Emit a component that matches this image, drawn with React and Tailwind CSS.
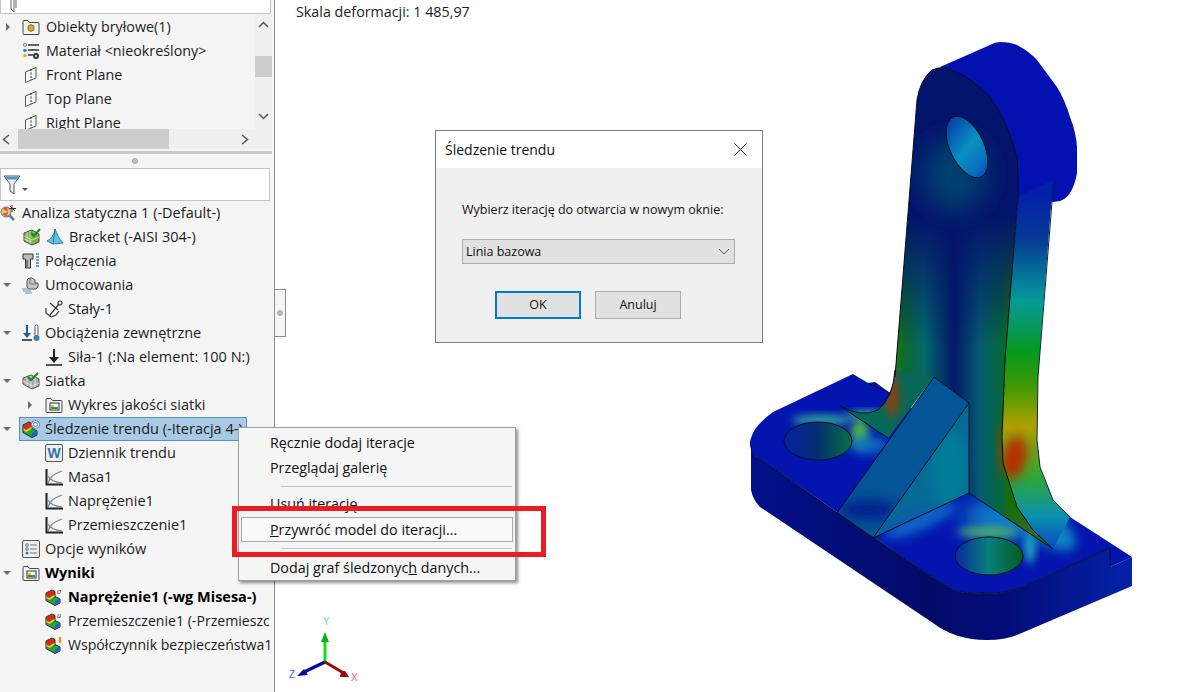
import React from 'react'

function Arrow({ open }) {
  return (
    <svg width="8" height="8" viewBox="0 0 8 8" className="shrink-0">
      {open ? <path d="M0 2h8L4 6z" fill="#6d6d6d" /> : <path d="M2 0v8l4-4z" fill="#6d6d6d" />}
    </svg>
  )
}

function Folder({ children }) {
  return (
    <svg width="18" height="18" viewBox="0 0 18 18">
      <path d="M1 15.500V3.500q0-1 1-1h4l1.500 2H16q1 0 1 1v10q0 1-1 1H2q-1 0-1-1z" fill="#f3f3f3" stroke="#444" />
      {children}
    </svg>
  )
}

function Plane() {
  return (
    <svg width="18" height="18" viewBox="0 0 18 18" fill="none" stroke="#555">
      <path d="M3.500 6 14 1.500V12L3.500 16.500z" />
      <path d="M9 3v11" strokeDasharray="2 1.500" stroke="#222" />
    </svg>
  )
}

function MaterialIcon() {
  return (
    <svg width="18" height="18" viewBox="0 0 18 18">
      <circle cx="3" cy="3" r="1.700" fill="#ddd" stroke="#666" strokeWidth=".7" />
      <circle cx="3" cy="8.500" r="1.800" fill="#2f86c8" />
      <circle cx="3" cy="13.500" r="1.800" fill="#e5b32a" />
      <path d="M6 3h11M6 8h11M6 13h5" stroke="#333" strokeWidth="1.500" />
      <circle cx="14" cy="14" r="3" fill="#333" />
      <circle cx="14" cy="14" r="1" fill="#fff" />
    </svg>
  )
}

function Stress({ mark }) {
  return (
    <svg width="18" height="18" viewBox="0 0 18 18">
      <path d="M1 5l6-3 3 1.500v5l5 2.500v4l-5 2.500-9-5z" fill="#22a838" stroke="#222" />
      <path d="M1.500 5.300l5.500-2.800 2.500 1.200v3L4 10l-2.500-1.300z" fill="#e02818" />
      <path d="M1.500 8.500L4 10l5.500-3v1.500L4.500 12l-3-1.700z" fill="#eed020" />
      <path d="M10 17l5-2.500v-4L10 13z" fill="#1f62d0" />
      {mark === 'target' && <g fill="#fff" stroke="#4a7fb5"><circle cx="13.500" cy="4.500" r="4" /><circle cx="13.500" cy="4.500" r="2" /></g>}
      {mark === 'sigma' && <text x="12" y="6" fontSize="7" fontStyle="italic" fill="#222">σ</text>}
      {mark === 'u' && <text x="12" y="6" fontSize="7" fontStyle="italic" fill="#222">u</text>}
      {mark === 'bang' && <path d="M15 1v6" stroke="#d8a010" strokeWidth="2.500" />}
    </svg>
  )
}

function Graph() {
  return (
    <svg width="18" height="18" viewBox="0 0 18 18" fill="none">
      <path d="M1.500 1v15.500H18" stroke="#222" strokeWidth="2" />
      <path d="M3 15 Q5 7 17 3M3 8q3 6 14 7" stroke="#6d8aa0" strokeWidth="1.300" />
    </svg>
  )
}

const icons = {
  study: (
    <svg width="18" height="18" viewBox="0 0 18 18">
      <circle cx="6" cy="8" r="5" fill="#e8d040" stroke="#777" />
      <path d="M3 5a5 5 0 0 1 4-2l1 5zM2 10l6-2-1 5z" fill="#d84a80" />
      <path d="M9 11l5 5" stroke="#4a7fb5" strokeWidth="2.500" />
      <path d="M12 1v7M9 4.500h7M10 2l5 5" stroke="#333" />
    </svg>
  ),
  mesh: (
    <svg width="18" height="18" viewBox="0 0 18 18">
      <path d="M1 5l8-3 7 4v8l-7 3-8-4z" fill="#7fb04a" stroke="#4b4b4b" />
      <path d="M4 4v10M7 3v13M1 8l8 4 7-3M1 11l8 3" stroke="#e6f0d8" strokeWidth=".7" fill="none" />
      <path d="M8 5l3 3 6-7" stroke="#138a13" strokeWidth="2" fill="none" />
    </svg>
  ),
  solid: (
    <svg width="18" height="18" viewBox="0 0 18 18">
      <path d="M9 1C8 7 5 11 1 13l6 3 10-1C13 11 11 6 9 1z" fill="#5cc0e0" stroke="#2a7fa5" />
      <path d="M9 1l-2 15" stroke="#2a7fa5" />
    </svg>
  ),
  bolt: (
    <svg width="18" height="18" viewBox="0 0 18 18">
      <path d="M1 2h10v5H8.500v9h-5V7H1z" fill="#bbb" stroke="#333" />
      <path d="M5 8v7" stroke="#333" />
      <path d="M14 2h3M14 5h3M14 8h3M14 11h3M14 14h3" stroke="#3a80b0" strokeWidth="1.400" />
    </svg>
  ),
  fixture: (
    <svg width="18" height="18" viewBox="0 0 18 18">
      <path d="M5 11V5q0-3 3-3h2l3 2v3h3v4l-2 2H7z" fill="#c4c4c4" stroke="#555" />
      <path d="M8 3v5h6" stroke="#777" fill="none" />
      <path d="M0 13h8M1 15h8M3 17h7" stroke="#6b8ead" />
    </svg>
  ),
  anchor: (
    <svg width="18" height="18" viewBox="0 0 18 18" fill="none" stroke="#333" strokeWidth="1.200">
      <circle cx="15" cy="3" r="2" />
      <path d="M13.500 4.500 5 15M1 8v5l5 4M5 3l8 7M14 11l-3 4-5 2" />
    </svg>
  ),
  loads: (
    <svg width="18" height="18" viewBox="0 0 18 18">
      <path d="M5 1v10" stroke="#1f5f9c" strokeWidth="2" />
      <path d="M1 9h8l-4 5z" fill="#1f5f9c" />
      <path d="M0 16h10" stroke="#222" strokeWidth="1.500" />
      <rect x="13" y="1" width="3" height="11" rx="1.500" fill="#fff" stroke="#555" />
      <circle cx="14.500" cy="14" r="3" fill="#3a80b0" />
    </svg>
  ),
  force: (
    <svg width="18" height="18" viewBox="0 0 18 18">
      <path d="M9 1v10" stroke="#222" strokeWidth="2" />
      <path d="M4 9h10l-5 6z" fill="#222" />
      <path d="M1 17h16" stroke="#222" strokeWidth="1.500" />
    </svg>
  ),
  netcheck: (
    <svg width="18" height="18" viewBox="0 0 18 18">
      <path d="M1 6l8-3 8 4v7l-7 3-9-5z" fill="#aaa" stroke="#555" />
      <path d="M1 9l9 5 7-3M5 5v9M9 4v12M13 5v10" stroke="#eee" strokeWidth=".8" fill="none" />
      <path d="M6 5l3 3 7-7" stroke="#138a13" strokeWidth="2" fill="none" />
    </svg>
  ),
  word: (
    <svg width="18" height="18" viewBox="0 0 18 18">
      <rect x=".5" y=".5" width="17" height="17" rx="1.500" fill="#eee" stroke="#555" />
      <text x="9" y="14" textAnchor="middle" fontSize="14" fontWeight="700" fontFamily="Liberation Sans" fill="#2f78ad">W</text>
    </svg>
  ),
  options: (
    <svg width="18" height="18" viewBox="0 0 18 18">
      <rect x=".5" y=".5" width="17" height="17" rx="1.500" fill="#eee" stroke="#555" />
      <circle cx="5" cy="5" r="1.500" fill="#bbb" stroke="#666" strokeWidth=".6" />
      <circle cx="5" cy="9" r="1.500" fill="#bbb" stroke="#666" strokeWidth=".6" />
      <circle cx="5" cy="13" r="1.500" fill="#2f78ad" />
      <path d="M8 5h7M8 9h7M8 13h7" stroke="#777" />
    </svg>
  ),
  chartFolder: (
    <Folder>
      <rect x="5" y="7" width="9" height="7" fill="#fff" stroke="#333" />
      <path d="M6 13V9h3v2h4v2z" fill="#2c9a3a" />
      <path d="M6 9h3v2H6z" fill="#e8c020" />
    </Folder>
  ),
}

const rows = [
  { left: 0, textAt: 22, icon: icons.study, label: 'Analiza statyczna 1 (-Default-)' },
  { left: 23, textAt: 69, icon: icons.mesh, extra: icons.solid, label: 'Bracket (-AISI 304-)' },
  { left: 22, textAt: 45, icon: icons.bolt, label: 'Połączenia' },
  { left: 22, textAt: 45, open: true, icon: icons.fixture, label: 'Umocowania' },
  { left: 45, textAt: 68, icon: icons.anchor, label: 'Stały-1' },
  { left: 22, textAt: 45, open: true, icon: icons.loads, label: 'Obciążenia zewnętrzne' },
  { left: 45, textAt: 68, icon: icons.force, label: 'Siła-1 (:Na element: 100 N:)' },
  { left: 22, textAt: 45, open: true, icon: icons.netcheck, label: 'Siatka' },
  { left: 45, textAt: 68, closed: true, icon: icons.chartFolder, label: 'Wykres jakości siatki' },
  { left: 22, textAt: 45, open: true, selected: true, icon: <Stress mark="target" />, label: 'Śledzenie trendu (-Iteracja 4-)' },
  { left: 45, textAt: 68, icon: icons.word, label: 'Dziennik trendu' },
  { left: 45, textAt: 68, icon: <Graph />, label: 'Masa1' },
  { left: 45, textAt: 68, icon: <Graph />, label: 'Naprężenie1' },
  { left: 45, textAt: 68, icon: <Graph />, label: 'Przemieszczenie1' },
  { left: 22, textAt: 45, icon: icons.options, label: 'Opcje wyników' },
  { left: 22, textAt: 45, open: true, bold: true, icon: icons.chartFolder, label: 'Wyniki' },
  { left: 45, textAt: 68, bold: true, icon: <Stress mark="sigma" />, label: 'Naprężenie1 (-wg Misesa-)' },
  { left: 45, textAt: 68, small: true, icon: <Stress mark="u" />, label: 'Przemieszczenie1 (-Przemieszc' },
  { left: 45, textAt: 68, small: true, icon: <Stress mark="bang" />, label: 'Współczynnik bezpieczeństwa1' },
]

function TreeRow({ row }) {
  return (
    <div className="relative h-6 whitespace-nowrap">
      {row.open && <div className="absolute left-[3px] top-2"><Arrow open /></div>}
      {row.closed && <div className="absolute left-[26px] top-2"><Arrow /></div>}
      {row.selected && <div className="absolute left-[19px] top-0 h-6 w-[228px] bg-[#a9c9e4] border border-[#4f94c4]"></div>}
      <div className="absolute top-[3px]" style={{ left: row.left }}>{row.icon}</div>
      {row.extra && <div className="absolute left-[46px] top-[3px]">{row.extra}</div>}
      <span className={`absolute top-0 leading-6 ${row.small ? 'text-[14.1px]' : 'text-[14.5px]'} ${row.bold ? 'font-bold text-black' : 'text-[#1c1c1c]'}`} style={{ left: row.textAt }}>
        {row.label}
      </span>
    </div>
  )
}

function Sidebar() {
  const top = [
    { closed: true, icon: <Folder><path d="M6 8l3-1.500L12 8v4l-3 1.500L6 12z" fill="#e6a817" stroke="#444" strokeWidth=".7" /></Folder>, label: 'Obiekty bryłowe(1)' },
    { icon: <MaterialIcon />, label: 'Materiał <nieokreślony>' },
    { icon: <Plane />, label: 'Front Plane' },
    { icon: <Plane />, label: 'Top Plane' },
    { icon: <Plane />, label: 'Right Plane' },
  ]
  return (
    <aside className="w-[275px] h-full shrink-0 bg-[#f5f5f5] border-r border-[#8c8c8c] flex flex-col overflow-hidden">
      <div className="h-[14px] w-[271px] bg-white border-b border-l border-r border-[#c4c4c4] shrink-0 overflow-hidden pl-[9px]">
        <svg width="8" height="13" viewBox="0 0 8 13" fill="none" stroke="#666"><path d="M1 0v9l3 3V0M6 0v8" /></svg>
      </div>
      <div className="flex h-[115px] shrink-0 w-[272px]">
        <div className="w-[255px] overflow-hidden pt-px">
          {top.map((r) => (
            <div key={r.label} className="relative h-6 whitespace-nowrap">
              {r.closed && <div className="absolute left-[4px] top-2"><Arrow /></div>}
              <div className="absolute left-[22px] top-[3px]">{r.icon}</div>
              <span className="absolute left-[46px] top-0 leading-6 text-[14.3px] text-[#1c1c1c]">{r.label}</span>
            </div>
          ))}
        </div>
        <div className="w-[17px] bg-[#f0f0f0] flex flex-col items-center">
          <svg width="11" height="7" viewBox="0 0 11 7" fill="none" stroke="#555" strokeWidth="1.500" className="mt-[7px]"><path d="M1 6l4.500-4.500L10 6" /></svg>
          <div className="w-full h-[21px] bg-[#cdcdcd] mt-[28px]"></div>
          <svg width="11" height="7" viewBox="0 0 11 7" fill="none" stroke="#555" strokeWidth="1.500" className="mt-[36px]"><path d="M1 1l4.500 4.500L10 1" /></svg>
        </div>
      </div>
      <div className="flex h-5 w-[272px] bg-[#f0f0f0] items-center shrink-0">
        <svg width="18" height="11" viewBox="0 0 18 11" fill="none" stroke="#555" strokeWidth="1.500"><path d="M9 1L3.500 5.500 9 10" /></svg>
        <div className="w-[151px] h-full bg-[#cdcdcd]"></div>
        <svg width="11" height="11" viewBox="0 0 11 11" fill="none" stroke="#555" strokeWidth="1.500" className="ml-[70px]"><path d="M3 1l5.500 4.500L3 10" /></svg>
      </div>
      <div className="h-[3px] w-[272px] mt-[2px] bg-[#c9c9c9] shrink-0"></div>
      <div className="h-[14px] flex items-center justify-center w-[270px] shrink-0">
        <div className="w-[6px] h-[6px] rounded-full bg-[#c2c2c2] border border-[#a8a8a8]"></div>
      </div>
      <div className="h-[33px] w-[270px] bg-white border border-[#c4c4c4] shrink-0 flex items-center pl-[2px] gap-[1px]">
        <svg width="18" height="20" viewBox="0 0 18 20">
          <path d="M1 1h16l-6 8v10l-4-3V9z" fill="#eee" stroke="#555" />
          <path d="M2 2h14l-2 2.500H4z" fill="#3f9bd0" />
        </svg>
        <div className="w-0 h-0 mt-[10px] border-x-[3px] border-x-transparent border-t-[3px] border-t-[#555]"></div>
      </div>
      <div>
        {rows.map((row, i) => <TreeRow key={i} row={row} />)}
      </div>
    </aside>
  )
}

function Dialog() {
  return (
    <div className="absolute left-[160px] top-[130px] w-[328px] h-[213px] border border-[#7b7b7b] bg-[#f0f0f0] flex flex-col">
      <div className="h-[37px] bg-white flex items-center justify-between pl-[9px] pr-[15px] shrink-0">
        <span className="text-[14px] text-[#111]">Śledzenie trendu</span>
        <svg width="13" height="13" viewBox="0 0 13 13" stroke="#222" fill="none"><path d="M.5.500l12 12M12.500.500l-12 12" /></svg>
      </div>
      <div className="pl-[26px] pt-[31px] text-[12.5px] text-[#111]">
        <p className="leading-[21px]">Wybierz iterację do otwarcia w nowym oknie:</p>
        <div className="mt-[19px] w-[273px] h-[25px] bg-[#e1e1e1] border border-[#adadad] flex items-center justify-between pl-[3px] pr-[4px]">
          <span className="pt-px">Linia bazowa</span>
          <svg width="12" height="7" viewBox="0 0 12 7" fill="none" stroke="#555"><path d="M1 1l5 5 5-5" /></svg>
        </div>
        <div className="flex gap-[14px] mt-[27px] ml-[33px]">
          <button className="w-[86px] h-[28px] pt-px bg-[#e1e1e1] border-2 border-[#0078d7]">OK</button>
          <button className="w-[86px] h-[28px] pt-px bg-[#e1e1e1] border border-[#adadad]">Anuluj</button>
        </div>
      </div>
    </div>
  )
}

function ContextMenu() {
  return (
    <div className="absolute left-[238px] top-[427px] w-[278px] h-[154px] bg-[#f5f5f5] border border-[#a0a0a0] shadow-[2px_2px_3px_rgba(0,0,0,0.45)] px-[2px] pt-[2px] text-[14.3px] text-[#111]">
      <div className="h-[25px] leading-[25px] pl-[29px]">Ręcznie dodaj iteracje</div>
      <div className="h-[25px] leading-[25px] pl-[29px]">Przeglądaj <u>g</u>alerię</div>
      <div className="h-px bg-[#c6c6c6] ml-[40px] mr-px mt-[6px] mb-[4px]"></div>
      <div className="h-[25px] leading-[25px] pl-[29px]"><u>U</u>suń iterację</div>
      <div className="h-[25px] leading-[24px] pl-[28px] bg-[#f9f9f9] border border-[#a8a8a8] mt-px"><u>P</u>rzywróć model do iteracji...</div>
      <div className="h-px bg-[#c6c6c6] ml-[40px] mr-px mt-[6px] mb-[6px]"></div>
      <div className="h-[25px] leading-[25px] pl-[29px]">Dodaj graf śledzonyc<u>h</u> danych...</div>
    </div>
  )
}

function Bracket() {
  const front = 'M895 377L917 100Q920 80 932 70Q938 67 945 68Q968 74 990 97Q1008 122 1017 157L1018 177V197L1005 360L1002 437L1003 463L1017 507L1033 530L1053 549L969 493V403L934 377Z'
  const band = 'M1053 180L1038 377L1037 440L1040 467L1053 500L1070 517L1053 549L1033 530L1017 507L1003 463L1002 437L1005 360L1018 197Z'
  const corner = 'L933 578L757 457Q747 448 751 438Q754 426 773 412'
  const baseTop = `M853 374L868 383L875 382L890 393L1070 517L1132 557L1110 567V548L1023 587Q1000 595 983 593Q965 594 953 590${corner}Z`
  const baseSide = 'M751 442V490Q753 500 760 507L933 623Q955 640 987 640Q1005 640 1017 635L1132 586V557L1110 567V548L1023 587Q1000 595 983 593Q965 594 953 590L933 578L757 457Q752 450 751 442Z'
  const cylinder = 'M940 67L990 45Q995 42 1000 42Q1010 42 1017 45Q1030 52 1037 60L1057 87Q1065 100 1070 117Q1076 132 1077 147V173Q1075 185 1070 193Q1066 199 1060 201L1053 202L1018 197L1000 120Z'
  return (
    <svg width="921" height="692" viewBox="275 0 921 692" className="absolute left-0 top-0">
      <defs>
        <filter id="b3" x="-50%" y="-50%" width="200%" height="200%"><feGaussianBlur stdDeviation="4" /></filter>
        <filter id="b6" x="-50%" y="-50%" width="200%" height="200%"><feGaussianBlur stdDeviation="6" /></filter>
        <filter id="b12" x="-50%" y="-50%" width="200%" height="200%"><feGaussianBlur stdDeviation="12" /></filter>
        <clipPath id="cFront"><path d={front} /></clipPath>
        <clipPath id="cBand"><path d={band} /></clipPath>
        <clipPath id="cTop"><path d={baseTop} /></clipPath>
        <clipPath id="cSide"><path d={baseSide} /></clipPath>
        <clipPath id="cRib"><path d="M934 377L969 403L873 538L837 513Z" /></clipPath>
        <clipPath id="cTri"><path d="M969 403V493L873 538Z" /></clipPath>
        <clipPath id="cFil"><path d="M840 406Q862 418 878 410Q893 398 895 370L934 377L888 438Z" /></clipPath>
        <clipPath id="cH1"><ellipse cx="818" cy="441" rx="34" ry="19" /></clipPath>
        <clipPath id="cH2"><ellipse cx="989" cy="556" rx="34" ry="19" /></clipPath>
        <linearGradient id="gFade" x1="0" y1="215" x2="0" y2="345" gradientUnits="userSpaceOnUse">
          <stop offset="0" stopColor="#000" />
          <stop offset="1" stopColor="#fff" />
        </linearGradient>
        <mask id="mFade" maskUnits="userSpaceOnUse" x="880" y="60" width="190" height="500">
          <rect x="880" y="60" width="190" height="500" fill="url(#gFade)" />
        </mask>
        <linearGradient id="gFront" x1="893" y1="0" x2="1010" y2="0" gradientUnits="userSpaceOnUse">
          <stop offset="0" stopColor="#2f7a00" />
          <stop offset=".1" stopColor="#0a6a30" />
          <stop offset=".27" stopColor="#04686a" />
          <stop offset=".52" stopColor="#021868" />
          <stop offset=".74" stopColor="#045a70" />
          <stop offset=".93" stopColor="#06683a" />
          <stop offset="1" stopColor="#1a6e08" />
        </linearGradient>
        <linearGradient id="gBand" x1="0" y1="195" x2="0" y2="545" gradientUnits="userSpaceOnUse">
          <stop offset="0" stopColor="#0320a8" />
          <stop offset=".13" stopColor="#063c98" />
          <stop offset=".3" stopColor="#069a98" />
          <stop offset=".45" stopColor="#069a20" />
          <stop offset=".55" stopColor="#409a00" />
          <stop offset=".66" stopColor="#b0a000" />
          <stop offset=".8" stopColor="#30a830" />
          <stop offset=".92" stopColor="#0a90b0" />
          <stop offset="1" stopColor="#0a50c0" />
        </linearGradient>
        <linearGradient id="gHole" x1="955" y1="115" x2="985" y2="178" gradientUnits="userSpaceOnUse">
          <stop offset="0" stopColor="#0436a8" />
          <stop offset=".5" stopColor="#0a90c0" />
          <stop offset=".8" stopColor="#0870c0" />
          <stop offset="1" stopColor="#0440b8" />
        </linearGradient>
        <linearGradient id="gH2" x1="955" y1="0" x2="1023" y2="0" gradientUnits="userSpaceOnUse">
          <stop offset="0" stopColor="#0828a0" />
          <stop offset=".5" stopColor="#06807a" />
          <stop offset="1" stopColor="#045a20" />
        </linearGradient>
        <linearGradient id="gH1" x1="784" y1="0" x2="852" y2="0" gradientUnits="userSpaceOnUse">
          <stop offset="0" stopColor="#0520a0" />
          <stop offset=".5" stopColor="#043070" />
          <stop offset="1" stopColor="#067040" />
        </linearGradient>
        <linearGradient id="gSide" x1="760" y1="0" x2="1132" y2="0" gradientUnits="userSpaceOnUse">
          <stop offset="0" stopColor="#030f88" />
          <stop offset=".45" stopColor="#020a68" />
          <stop offset=".65" stopColor="#020c78" />
          <stop offset="1" stopColor="#0422a8" />
        </linearGradient>
      </defs>

      <path d={baseSide} fill="url(#gSide)" />

      <path d={baseTop} fill="#0414ae" />
      <g clipPath="url(#cTop)">
        <ellipse cx="1010" cy="518" rx="48" ry="20" fill="#0a88c8" filter="url(#b12)" />
        <ellipse cx="1050" cy="530" rx="30" ry="14" transform="rotate(35 1050 530)" fill="#0888c0" filter="url(#b6)" />
        <ellipse cx="920" cy="520" rx="40" ry="10" transform="rotate(-24 920 520)" fill="#0868c8" filter="url(#b6)" />
        <ellipse cx="988" cy="532" rx="30" ry="5" fill="#50b868" filter="url(#b3)" />
        <ellipse cx="1030" cy="548" rx="5" ry="16" fill="#20b8c0" filter="url(#b3)" />
        <ellipse cx="860" cy="433" rx="9" ry="14" fill="#50b848" filter="url(#b3)" />
        <ellipse cx="822" cy="420" rx="30" ry="5" fill="#30b098" filter="url(#b3)" />
        <ellipse cx="868" cy="415" rx="22" ry="4" fill="#40c890" filter="url(#b3)" />
        <ellipse cx="868" cy="445" rx="20" ry="8" fill="#0a78c0" filter="url(#b6)" />
      </g>
      <g clipPath="url(#cH1)">
        <rect x="780" y="420" width="75" height="42" fill="url(#gH1)" />
      </g>
      <g clipPath="url(#cH2)">
        <rect x="950" y="535" width="75" height="42" fill="url(#gH2)" />
      </g>

      <path d={cylinder} fill="#0410b0" />
      <path d={band} fill="url(#gBand)" />
      <g clipPath="url(#cBand)">
        <ellipse cx="1014" cy="458" rx="12" ry="22" transform="rotate(14 1014 458)" fill="#b82a00" filter="url(#b6)" />
      </g>

      <path d={front} fill="#03146c" />
      <g clipPath="url(#cFront)">
        <ellipse cx="955" cy="175" rx="32" ry="36" fill="#03406e" filter="url(#b12)" />
        <rect x="880" y="60" width="190" height="500" fill="url(#gFront)" mask="url(#mFade)" />
        <ellipse cx="1004" cy="450" rx="5" ry="28" fill="#704a08" filter="url(#b3)" />
        <ellipse cx="1030" cy="528" rx="14" ry="20" fill="#2a6a20" filter="url(#b6)" />
      </g>
      <ellipse cx="967" cy="147" rx="17" ry="33" transform="rotate(-25 967 147)" fill="url(#gHole)" />

      <g clipPath="url(#cFil)">
        <rect x="835" y="365" width="105" height="80" fill="#07685a" />
        <ellipse cx="892" cy="395" rx="7" ry="22" fill="#8a4010" filter="url(#b3)" />
      </g>

      <path d="M934 377L969 403L873 538L837 513Z" fill="#055498" />
      <g clipPath="url(#cRib)">
        <ellipse cx="868" cy="510" rx="30" ry="10" fill="#04248e" filter="url(#b6)" />
      </g>
      <path d="M969 403V493L873 538Z" fill="#066a96" />
      <g clipPath="url(#cTri)">
        <ellipse cx="950" cy="470" rx="18" ry="40" fill="#067c98" filter="url(#b6)" />
        <ellipse cx="905" cy="522" rx="30" ry="8" transform="rotate(-25 905 522)" fill="#0a5aa8" filter="url(#b3)" />
      </g>

      <g fill="none" stroke="#04121e" strokeWidth="1">
        <path d="M895 377L917 100Q920 80 932 70Q938 67 945 68Q968 74 990 97Q1008 122 1017 157L1018 177V197L1005 360L1002 437L1003 463L1017 507L1033 530L1053 549" />
        <path d="M969 493L1053 549" />
        <path d="M1053 180L1052 202L1038 377L1037 440L1040 467L1053 500L1070 517" stroke="#04284a" />
        <ellipse cx="967" cy="147" rx="17" ry="33" transform="rotate(-25 967 147)" />
        <path d="M934 377L969 403L873 538L837 513ZM969 403V493L873 538" />
        <path d="M840 406L888 438M840 406Q862 418 878 410Q893 398 895 370" />
        <path d="M837 513L933 578" />
        <path d="M757 457L837 513M933 578L953 590Q965 594 983 593Q1000 595 1023 587L1110 548V567" />
        <path d="M868 383L890 393" />
        <ellipse cx="818" cy="441" rx="34" ry="19" />
        <ellipse cx="989" cy="556" rx="34" ry="19" />
      </g>

      <path d="M325 662V640" stroke="#10e010" strokeWidth="3" />
      <path d="M325 632l-4 10h8z" fill="#10b010" />
      <path d="M325 662L302 673" stroke="#000a9c" strokeWidth="3.5" />
      <path d="M297 676l7-7 4 6z" fill="#000a9c" />
      <path d="M325 662L342 672" stroke="#a00808" strokeWidth="3" />
      <path d="M349 677l-9 0 1-6 4 0z" fill="#a00808" />
      <g fontFamily="Liberation Sans" fontSize="10">
        <text x="323" y="625" fill="#70e890">Y</text>
        <text x="289" y="678" fill="#5a5af0">Z</text>
        <text x="351" y="681" fill="#f06060">X</text>
      </g>
    </svg>
  )
}

function App() {
  return (
    <div className="relative w-[1196px] h-[692px] overflow-hidden bg-white flex font-['Open_Sans',sans-serif]">
      <Sidebar />
      <main className="relative flex-1 h-full">
        <p className="pl-[21px] pt-px leading-[22px] text-[14.3px] text-[#222]">Skala deformacji: 1 485,97</p>
        <div className="absolute left-0 top-[289px] w-[11px] h-[48px] bg-[#f5f5f5] border border-l-0 border-[#8c8c8c] flex items-center justify-center">
          <div className="w-[6px] h-[6px] rounded-full bg-[#c2c2c2] border border-[#a8a8a8]"></div>
        </div>
        <Bracket />
        <Dialog />
      </main>
      <ContextMenu />
      {/* czerwona ramka na zrzucie */}
      <div className="absolute left-[232px] top-[506px] w-[314px] h-[51px] border-[5px] border-[#ed1c24]"></div>
    </div>
  )
}

export default App
